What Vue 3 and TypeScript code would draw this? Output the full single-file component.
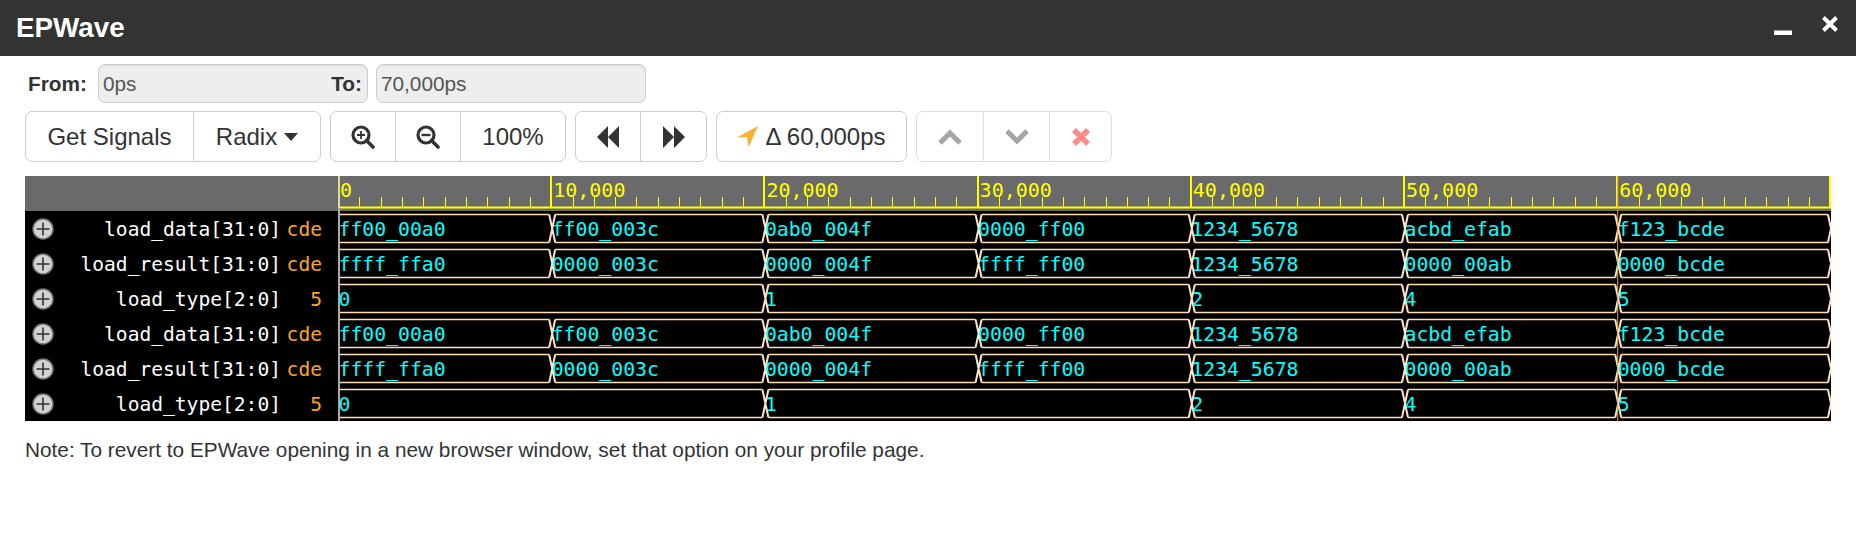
<template>
  <div class="page">
    <header class="title-bar">
      <span class="title">EPWave</span>
      <div class="window-controls">
        <svg class="win-min" width="18" height="6" viewBox="0 0 18 6"><rect x="0" y="0.5" width="18" height="4.5" fill="#fff" /></svg>
        <svg width="18" height="18" viewBox="0 0 18 18"><path d="M2.5 2.5 15.500 15.500M15.500 2.500 2.500 15.500" stroke="#fff" stroke-width="4" /></svg>
      </div>
    </header>

    <div class="range-row">
      <label class="range-label">From:</label>
      <div class="from-field">
        <input class="range-input" type="text" value="0ps" readonly />
        <label class="range-label to-label">To:</label>
      </div>
      <input class="range-input" type="text" value="70,000ps" readonly />
    </div>

    <div class="toolbar">
      <div class="btn-group">
        <button class="btn w-signals">Get Signals</button>
        <button class="btn w-radix">Radix<span class="caret"></span></button>
      </div>
      <div class="btn-group">
        <button class="btn w-66">
          <svg width="24" height="24" viewBox="0 0 24 24" fill="none" stroke="#333">
            <circle cx="10" cy="10" r="8" stroke-width="3.2" />
            <path d="M15.500 15.500 22 22" stroke-width="3.600" stroke-linecap="round" />
            <path d="M10 6v8M6 10h8" stroke-width="1.800" />
          </svg>
        </button>
        <button class="btn w-66">
          <svg width="24" height="24" viewBox="0 0 24 24" fill="none" stroke="#333">
            <circle cx="10" cy="10" r="8" stroke-width="3.2" />
            <path d="M15.500 15.500 22 22" stroke-width="3.600" stroke-linecap="round" />
            <path d="M5.500 10h9" stroke-width="2.400" />
          </svg>
        </button>
        <button class="btn w-zoom">100%</button>
      </div>
      <div class="btn-group">
        <button class="btn w-66">
          <svg width="22" height="22" viewBox="0 0 22 22" fill="#333"><path d="M0 11 11 0v22zM11 11 22 0v22z" /></svg>
        </button>
        <button class="btn w-67">
          <svg width="22" height="22" viewBox="0 0 22 22" fill="#333"><path d="M22 11 11 0v22zM11 11 0 0v22z" /></svg>
        </button>
      </div>
      <button class="btn w-delta">
        <svg width="21" height="21" viewBox="0 0 20 20" fill="#f9ae2d"><path d="M20 0 0 11l9.500-.5L11 20z" /></svg>
        <span>Δ 60,000ps</span>
      </button>
      <div class="btn-group disabled">
        <button class="btn w-68">
          <svg width="24" height="16" viewBox="0 0 24 16" fill="none" stroke="#777" stroke-width="5"><path d="M2 14 12 4l10 10" /></svg>
        </button>
        <button class="btn w-67">
          <svg width="24" height="16" viewBox="0 0 24 16" fill="none" stroke="#777" stroke-width="5"><path d="M2 2l10 10L22 2" /></svg>
        </button>
        <button class="btn w-63">
          <svg width="18" height="18" viewBox="0 0 18 18" fill="none" stroke="#ff4d4d" stroke-width="5.500"><path d="M2 2l14 14M16 2 2 16" /></svg>
        </button>
      </div>
    </div>

    <div class="wave-view">
      <div class="names">
        <div class="names-head"></div>
        <div v-for="(s, i) in signals" :key="i" class="name-row">
          <svg class="expand" width="22" height="22" viewBox="0 0 22 22">
            <circle cx="11" cy="11" r="10" fill="#d3d3d3" stroke="#777" stroke-width="1.500" />
            <path d="M11 4.500v13M4.500 11h13" stroke="#333" stroke-width="1.600" />
          </svg>
          <span class="sig-name">{{ s.name }}</span>
          <span class="sig-value">{{ s.value }}</span>
        </div>
      </div>

      <svg class="canvas" :width="canvasW" height="245" :viewBox="`0 0 ${canvasW} 245`">
        <rect x="0" y="0" :width="canvasW" height="35" fill="#6a6a6a" />
        <g>
          <line v-for="x in minorTicks" :key="x" :x1="x" :x2="x" y1="21" y2="32" stroke="#ff0" />
          <line x1="0" :x2="canvasW" y1="31.500" y2="31.500" stroke="#ff0" stroke-width="2" />
          <line v-for="x in majorTicks" :key="x" :x1="x" :x2="x" y1="0" y2="32" stroke="#ff0" stroke-width="2" />
          <text v-for="(label, k) in rulerLabels" :key="label" class="mono ruler-text" :x="k * step + 2" y="21">{{ label }}</text>
        </g>

        <g v-for="(s, i) in signals" :key="i">
          <path :d="busLines(s.segs, rowTop(i))" class="bus" />
          <path :d="busEdges(s.segs, rowTop(i))" class="bus-edge" />
          <text
            v-for="seg in s.segs"
            :key="seg[0]"
            class="mono bus-text"
            :x="seg[0] * step + 0.500"
            :y="rowTop(i) + 21.500"
          >{{ seg[1] }}</text>
        </g>

        <rect x="0" y="0" width="2" height="245" fill="#aaa" />
        <rect x="0" y="0" width="2" height="32" fill="#dddd99" />
        <line :x1="6 * step + 0.500" :x2="6 * step + 0.500" y1="0" y2="245" stroke="#e8a33d" stroke-width="1" />
      </svg>
    </div>

    <p class="note">Note: To revert to EPWave opening in a new browser window, set that option on your profile page.</p>
  </div>
</template>

<script setup lang="ts">
type Seg = [number, string]

const canvasW = 1493
const step = 213.2
const edgeW = 3

const dataSegs: Seg[] = [[0, 'ff00_00a0'], [1, 'ff00_003c'], [2, '0ab0_004f'], [3, '0000_ff00'], [4, '1234_5678'], [5, 'acbd_efab'], [6, 'f123_bcde']]
const resultSegs: Seg[] = [[0, 'ffff_ffa0'], [1, '0000_003c'], [2, '0000_004f'], [3, 'ffff_ff00'], [4, '1234_5678'], [5, '0000_00ab'], [6, '0000_bcde']]
const typeSegs: Seg[] = [[0, '0'], [2, '1'], [4, '2'], [5, '4'], [6, '5']]

const signals = [
  { name: 'load_data[31:0]', value: 'cde', segs: dataSegs },
  { name: 'load_result[31:0]', value: 'cde', segs: resultSegs },
  { name: 'load_type[2:0]', value: '5', segs: typeSegs },
  { name: 'load_data[31:0]', value: 'cde', segs: dataSegs },
  { name: 'load_result[31:0]', value: 'cde', segs: resultSegs },
  { name: 'load_type[2:0]', value: '5', segs: typeSegs },
]

const rulerLabels = ['0', '10,000', '20,000', '30,000', '40,000', '50,000', '60,000']

const majorTicks: number[] = []
for (let k = 1; k <= 7; k++) majorTicks.push(k === 7 ? canvasW - 1 : Math.round(k * step))

const minorTicks: number[] = []
for (let k = 0; k < 70; k++) {
  if (k % 10 !== 0) minorTicks.push(Math.round((k * step) / 10) + 0.5)
}

const rowTop = (i: number) => 38.5 + i * 35

const edgesOf = (segs: Seg[]) => [...segs.map((s) => s[0] * step + 1), canvasW]

// flat top and bottom of each bus value
const busLines = (segs: Seg[], top: number) => {
  const edges = edgesOf(segs)
  let d = ''
  for (let k = 0; k < segs.length; k++) {
    const a = k === 0 ? 2 : edges[k] + edgeW
    const b = edges[k + 1] - edgeW
    d += `M${a} ${top}H${b}M${a} ${top + 28}H${b}`
  }
  return d
}

// the X drawn at each change of value
const busEdges = (segs: Seg[], top: number) =>
  edgesOf(segs)
    .slice(1)
    .map((x) => `M${x - edgeW} ${top}L${x + edgeW} ${top + 28}M${x + edgeW} ${top}L${x - edgeW} ${top + 28}`)
    .join('')
</script>

<style scoped>
.page {
  font-family: "Liberation Sans", Arial, sans-serif;
  color: #333;
}
.title-bar {
  height: 56px;
  background: #333;
  display: flex;
  align-items: center;
  justify-content: space-between;
  padding: 0 17px 0 16px;
  box-sizing: border-box;
}
.title {
  color: #fff;
  font-weight: bold;
  font-size: 27.800px;
}
.window-controls {
  display: flex;
  align-items: flex-start;
  align-self: flex-start;
  margin-top: 15px;
  gap: 29px;
}
.win-min {
  margin-top: 15px;
}
.range-row {
  display: flex;
  align-items: center;
  gap: 8px;
  margin: 8px 0 8px 28px;
  height: 39px;
}
.range-label {
  font-weight: bold;
  font-size: 20.800px;
}
.from-field {
  position: relative;
  display: flex;
  margin-left: 3px;
}
.to-label {
  position: absolute;
  right: 6px;
  top: 8px;
}
.range-input {
  width: 270px;
  height: 39px;
  box-sizing: border-box;
  background: #eee;
  border: 1px solid #ccc;
  border-radius: 7px;
  padding: 0 4px;
  font-family: inherit;
  font-size: 20.800px;
  color: #555;
  outline: 0;
  box-shadow: inset 0 1px 1px rgba(0, 0, 0, 0.075);
}
.toolbar {
  display: flex;
  gap: 9px;
  margin-left: 25px;
  height: 51px;
}
.btn-group {
  display: flex;
}
.btn {
  height: 51px;
  box-sizing: border-box;
  background: #fff;
  border: 1px solid #ccc;
  border-radius: 7px;
  padding: 0;
  display: flex;
  align-items: center;
  justify-content: center;
  font-family: inherit;
  font-size: 24px;
  color: #333;
}
.btn-group .btn {
  border-radius: 0;
  margin-left: -1px;
}
.btn-group .btn:first-child {
  margin-left: 0;
  border-radius: 7px 0 0 7px;
}
.btn-group .btn:last-child {
  border-radius: 0 7px 7px 0;
}
.disabled {
  opacity: 0.65;
}
.w-signals { width: 169px; }
.w-radix { width: 128px; }
.w-66 { width: 66px; }
.w-67 { width: 67px; }
.w-68 { width: 68px; }
.w-63 { width: 63px; }
.w-zoom { width: 106px; }
.w-delta { width: 191px; gap: 7px; }
.caret {
  width: 0;
  height: 0;
  margin-left: 7px;
  border-left: 7.500px solid transparent;
  border-right: 7.500px solid transparent;
  border-top: 8px solid #333;
}
.wave-view {
  display: flex;
  margin: 14px 0 0 25px;
  width: 1806px;
}
.names {
  width: 313px;
  flex: none;
  background: #000;
}
.names-head {
  height: 35px;
  background: #6a6a6a;
}
.name-row {
  height: 35px;
  display: flex;
  align-items: center;
  padding: 0 16px 0 7px;
  font-family: "DejaVu Sans Mono", monospace;
  font-size: 19.600px;
}
.expand {
  flex: none;
}
.sig-name {
  flex: 1;
  text-align: right;
  color: #fff;
  padding-top: 2px;
}
.sig-value {
  width: 36px;
  margin-left: 5px;
  text-align: right;
  color: #ffa51f;
  padding-top: 2px;
}
.canvas {
  display: block;
  background: #000;
  flex: none;
}
.mono {
  font-family: "DejaVu Sans Mono", monospace;
  font-size: 20px;
}
.ruler-text {
  fill: #ff0;
}
.bus-text {
  fill: #0ff;
  font-size: 19.800px;
}
.bus {
  fill: none;
  stroke: #ffdfba;
  stroke-width: 1.500;
}
.bus-edge {
  fill: none;
  stroke: #ffe3c4;
  stroke-width: 2;
}
.note {
  margin: 16px 0 0 25px;
  font-size: 20.800px;
  line-height: 26px;
  color: #333;
}
</style>
